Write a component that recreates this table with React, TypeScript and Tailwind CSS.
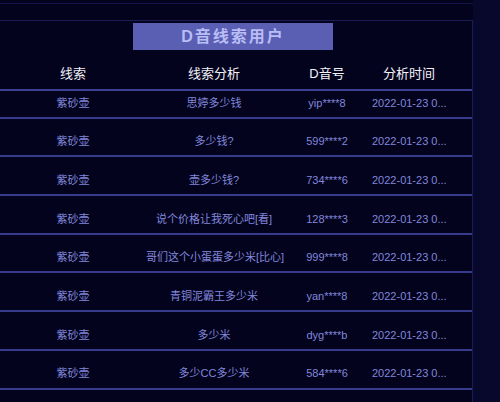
import React from "react";

const rows: [string, string, string][] = [
  ["紫砂壶", "思婷多少钱", "yip****8"],
  ["紫砂壶", "多少钱?", "599****2"],
  ["紫砂壶", "壶多少钱?", "734****6"],
  ["紫砂壶", "说个价格让我死心吧[看]", "128****3"],
  ["紫砂壶", "哥们这个小蛋蛋多少米[比心]", "999****8"],
  ["紫砂壶", "青铜泥霸王多少米", "yan****8"],
  ["紫砂壶", "多少米", "dyg****b"],
  ["紫砂壶", "多少CC多少米", "584****6"],
];

export default function App() {
  return (
    <div
      className="w-[500px] h-[402px] overflow-hidden flex bg-[#08082d]"
      style={{ fontFamily: '"Liberation Sans", "Noto Sans CJK SC", sans-serif' }}
    >
      <div className="w-[473px] h-full flex flex-col bg-[#04031d]">
        <div className="pt-[3px]">
          <div className="h-px bg-[#14144a]" />
        </div>
        <div className="h-[16px]" />
        <div className="flex-1 flex flex-col border-t border-r border-[#1b1c55] min-h-0">
          <div className="pt-[2px] pl-[133px]">
            <div className="w-[200px] h-[27px] bg-[#5a5fb3] flex items-center justify-center text-[16px] font-bold tracking-[2px] text-[#b9bdf6]">
              D音线索用户
            </div>
          </div>
          <div className="h-[41px] pt-[8px] grid grid-cols-[146px_136px_90px_74px_1fr] items-center border-b-2 border-[#3c4195] text-[13px] text-[#f2f2f8]">
            <div className="text-center">线索</div>
            <div className="text-center">线索分析</div>
            <div className="text-center">D音号</div>
            <div className="text-center">分析时间</div>
            <div />
          </div>
          <div className="flex-1 overflow-hidden min-h-0">
            <div className="-mt-[11px]">
              {rows.map((r, i) => (
                <div
                  key={i}
                  className="h-[38.7px] pt-[9px] grid grid-cols-[146px_136px_90px_74px_1fr] items-center border-b-2 border-[#363b8c] text-[11px] text-[#8187dc]"
                >
                  <div className="text-center">{r[0]}</div>
                  <div className="text-center whitespace-nowrap">{r[1]}</div>
                  <div className="text-center">{r[2]}</div>
                  <div className="text-center whitespace-nowrap">2022-01-23 0...</div>
                  <div />
                </div>
              ))}
            </div>
          </div>
        </div>
      </div>
      <div className="flex-1" />
    </div>
  );
}
